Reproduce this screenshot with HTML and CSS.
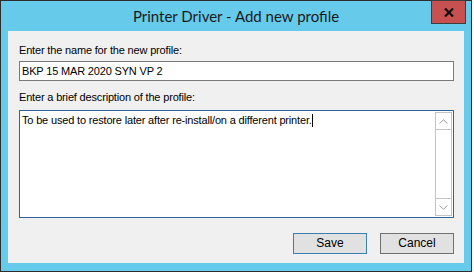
FILE: index.html
```html
<!DOCTYPE html>
<html lang="en">
<head>
  <meta charset="UTF-8">
  <meta name="viewport" content="width=device-width, initial-scale=1.0">
  <title>Printer Driver - Add new profile</title>
  <link rel="stylesheet" href="styles.css">
</head>
<body>
  <div class="window">
    <div class="titlebar">
      <div class="title">Printer Driver - Add new profile</div>
      <div class="close-btn">
        <svg width="10" height="9" viewBox="0 0 10 9">
          <path d="M1 0.5 L9 8.5 M9 0.5 L1 8.5" stroke="#111" stroke-width="2.2" fill="none"/>
        </svg>
      </div>
    </div>
    <div class="client">
      <div class="label">Enter the name for the new profile:</div>
      <div class="text-input">BKP 15 MAR 2020 SYN VP 2</div>
      <div class="label label-desc">Enter a brief description of the profile:</div>
      <div class="memo">
        <div class="memo-text">To be used to restore later after re-install/on a different printer.<span class="caret"></span></div>
        <div class="scrollbar">
          <div class="arrow">
            <svg width="9" height="5" viewBox="0 0 9 5"><path d="M0.5 4.5 L4.5 0.8 L8.5 4.5" stroke="#9a9a9a" fill="none"/></svg>
          </div>
          <div class="track"></div>
          <div class="arrow">
            <svg width="9" height="5" viewBox="0 0 9 5"><path d="M0.5 0.5 L4.5 4.2 L8.5 0.5" stroke="#9a9a9a" fill="none"/></svg>
          </div>
        </div>
      </div>
      <div class="buttons">
        <div class="button default">Save</div>
        <div class="button">Cancel</div>
      </div>
    </div>
  </div>
</body>
</html>
```

FILE: styles.css
```css
body {
  margin: 0;
  background-color: #ffffff;
  font-family: 'Liberation Sans', Arial, sans-serif;
  font-size: 11px;
  letter-spacing: -0.17px;
  color: #000;
}
.window {
  width: 472px;
  height: 272px;
  box-sizing: border-box;
  border: 1px solid #2d2d2d;
  background-color: #66cbea;
  display: flex;
  flex-direction: column;
}
.titlebar {
  height: 30px;
  display: grid;
  grid-template-columns: 1fr auto 1fr;
}
.title {
  grid-column: 2;
  font-family: Lato, 'Open Sans', sans-serif;
  font-size: 15px;
  letter-spacing: 0;
  line-height: 30px;
  color: #1a1a1a;
}
.close-btn {
  grid-column: 3;
  justify-self: end;
  width: 35px;
  height: 24px;
  margin-top: -1px;
  margin-right: 5px;
  box-sizing: border-box;
  background-color: #c75050;
  border: 1px solid #3d3d3d;
  display: flex;
  justify-content: center;
  align-items: center;
}
.client {
  flex: 1;
  margin: 0 7px 8px 7px;
  background-color: #f0f0f0;
  padding: 13px 10px 9px 11px;
  display: flex;
  flex-direction: column;
}
.label {
  line-height: 13px;
  margin-bottom: 4px;
}
.label-desc {
  margin-bottom: 6px;
}
.text-input {
  height: 20px;
  box-sizing: border-box;
  border: 1px solid #7a7a7a;
  background-color: #fff;
  padding: 0 2px;
  line-height: 18px;
  margin-bottom: 10px;
}
.memo {
  height: 108px;
  box-sizing: border-box;
  border: 1px solid #2f6596;
  background-color: #fff;
  padding: 1px;
  display: flex;
}
.memo-text {
  flex: 1;
  padding: 2px 1px;
  line-height: 13px;
}
.caret {
  display: inline-block;
  width: 1px;
  height: 13px;
  background-color: #000;
  vertical-align: top;
}
.scrollbar {
  width: 17px;
  box-sizing: border-box;
  border: 1px solid #c4c4c4;
  display: flex;
  flex-direction: column;
}
.arrow {
  height: 16px;
  display: flex;
  justify-content: center;
  align-items: center;
}
.track {
  flex: 1;
  border-top: 1px solid #c4c4c4;
  border-bottom: 1px solid #c4c4c4;
}
.buttons {
  margin-top: 15px;
  display: flex;
  justify-content: flex-end;
  gap: 13px;
}
.button {
  width: 74px;
  height: 21px;
  box-sizing: border-box;
  border: 1px solid #707070;
  background-color: #e1e1e1;
  text-align: center;
  line-height: 19px;
  font-size: 12px;
  letter-spacing: 0;
}
.button.default {
  border-color: #3c7fb1;
}
```
